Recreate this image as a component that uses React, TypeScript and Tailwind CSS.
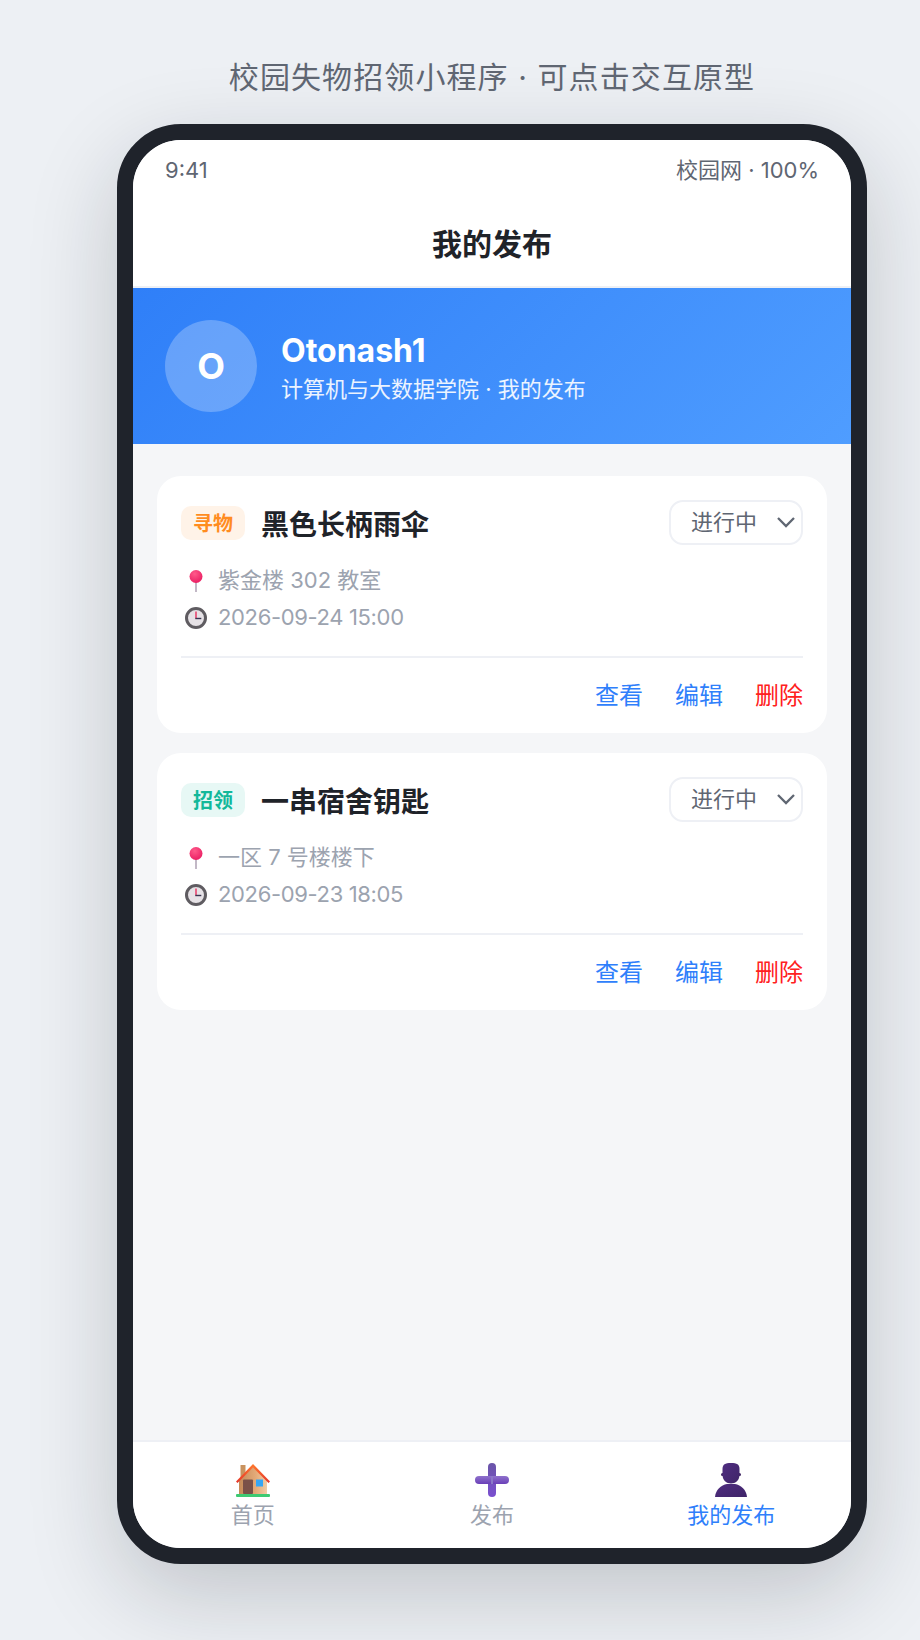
import React from 'react';

const PinIcon = ({ id }: { id: string }) => (
  <svg width="22" height="22" viewBox="0 0 22 22">
    <defs>
      <radialGradient id={id} cx="0.4" cy="0.3" r="0.8">
        <stop offset="0" stopColor="#ff5a8a" />
        <stop offset="1" stopColor="#e8185f" />
      </radialGradient>
    </defs>
    <rect x="10.200" y="10" width="1.600" height="12" fill="#b3a7b8" />
    <circle cx="11" cy="6.500" r="6.500" fill={`url(#${id})`} />
  </svg>
);

const ClockIcon = () => (
  <svg width="22" height="22" viewBox="0 0 22 22">
    <circle cx="11" cy="11" r="9.500" fill="#e6e2e6" stroke="#5f5c61" strokeWidth="3" />
    <rect x="10.300" y="4.500" width="1.400" height="7" fill="#e8315f" />
    <rect x="10.300" y="10.800" width="6" height="1.400" fill="#3a3550" />
  </svg>
);

const HomeIcon = () => (
  <svg width="34" height="34" viewBox="0 0 34 34">
    <defs>
      <linearGradient id="wall" x1="0" y1="0" x2="1" y2="0">
        <stop offset="0" stopColor="#c48a58" />
        <stop offset="0.6" stopColor="#e3aa78" />
        <stop offset="1" stopColor="#f2cda6" />
      </linearGradient>
      <linearGradient id="roof" x1="0" y1="1" x2="0" y2="0">
        <stop offset="0" stopColor="#e5352b" />
        <stop offset="1" stopColor="#ff7a2c" />
      </linearGradient>
    </defs>
    <rect x="4.500" y="2" width="5" height="14" fill="#c9935f" />
    <path d="M3 17.500 17 4l14 13.500V31H3z" fill="url(#wall)" />
    <path d="M0 18.500 17 1l17 17.500-1.500 1.500L17 4.500 1.500 20z" fill="url(#roof)" />
    <rect x="7" y="16.500" width="10" height="14.500" rx="1" fill="#7a5148" />
    <rect x="20" y="16.500" width="7" height="7" fill="#35a6f5" />
    <rect x="0" y="31" width="34" height="3" rx="1" fill="#3dca72" />
  </svg>
);

const PlusIcon = () => (
  <svg width="34" height="34" viewBox="0 0 34 34">
    <defs>
      <linearGradient id="plusV" x1="0" y1="0" x2="0" y2="1">
        <stop offset="0" stopColor="#6a55a8" />
        <stop offset="1" stopColor="#7a4fd0" />
      </linearGradient>
      <linearGradient id="plusH" x1="0" y1="0" x2="0" y2="1">
        <stop offset="0" stopColor="#8f72cc" />
        <stop offset="1" stopColor="#6a3fb8" />
      </linearGradient>
    </defs>
    <rect x="13" y="0" width="8" height="34" rx="4" fill="url(#plusV)" />
    <rect x="0" y="13" width="34" height="8" rx="4" fill="url(#plusH)" />
    <rect x="16" y="13" width="2" height="8" fill="#8a78c8" />
  </svg>
);

const PersonIcon = () => (
  <svg width="34" height="34" viewBox="0 0 34 34">
    <defs>
      <linearGradient id="person" x1="0" y1="0" x2="1" y2="1">
        <stop offset="0" stopColor="#4f2d80" />
        <stop offset="1" stopColor="#3f2468" />
      </linearGradient>
    </defs>
    <circle cx="8.500" cy="11.500" r="1.500" fill="#3b2160" />
    <circle cx="25.500" cy="11.500" r="1.500" fill="#3b2160" />
    <path d="M17 0c6 0 8.500 1.500 8.500 6v6c0 5-4 8.500-8.500 8.500S8.500 17 8.500 12V6C8.500 1.500 11 0 17 0z" fill="url(#person)" />
    <path d="M1 34c.5-7 6-12 12-13h8c6 1 11.500 6 12 13z" fill="url(#person)" />
  </svg>
);

const Chevron = () => (
  <svg width="18" height="11" viewBox="0 0 18 11" fill="none" stroke="#5f6672" strokeWidth="2.300">
    <path d="M1 1l8 8 8-8" />
  </svg>
);

type Post = {
  id: string;
  tag: string;
  tagClass: string;
  title: string;
  place: string;
  time: string;
};

const posts: Post[] = [
  { id: 'a', tag: '寻物', tagClass: 'bg-[#fff3e8] text-[#ff8c1f]', title: '黑色长柄雨伞', place: '紫金楼 302 教室', time: '2026-09-24 15:00' },
  { id: 'b', tag: '招领', tagClass: 'bg-[#e7f8f5] text-[#13b89a]', title: '一串宿舍钥匙', place: '一区 7 号楼楼下', time: '2026-09-23 18:05' },
];

const PostCard = ({ post }: { post: Post }) => (
  <div className="rounded-[24px] bg-white px-6 pt-6 pb-[19px]">
    <div className="flex items-center justify-between">
      <div className="flex items-center gap-4">
        <span className={`flex h-[34px] w-16 items-center justify-center rounded-[10px] pt-[2px] text-[20px] font-bold ${post.tagClass}`}>{post.tag}</span>
        <span className="pt-1 text-[28px] leading-[36px] font-bold text-[#1f2329]">{post.title}</span>
      </div>
      <div className="flex h-[45px] w-[134px] items-center justify-between rounded-[14px] border-2 border-[#eef0f5] pr-[6px] pl-[20px] text-[22px] text-[#5f6672]">
        进行中
        <Chevron />
      </div>
    </div>
    <div className="mt-[19px] flex flex-col gap-1 pl-1 text-[22px] leading-[33px] text-[#9ca3af]">
      <div className="flex items-center gap-[11px]">
        <PinIcon id={`pin-${post.id}`} />
        <span>{post.place}</span>
      </div>
      <div className="flex items-center gap-[11px]">
        <ClockIcon />
        <span className="tracking-[-0.35px]">{post.time}</span>
      </div>
    </div>
    <div className="mt-[22px] flex justify-end gap-8 border-t-2 border-[#eef0f5] pt-[20px] text-[24px] leading-[36px]">
      <span className="text-[#2f7ffb]">查看</span>
      <span className="text-[#2f7ffb]">编辑</span>
      <span className="text-[#ff2020]">删除</span>
    </div>
  </div>
);

const NavItem = ({ icon, label, active }: { icon: React.ReactNode; label: string; active?: boolean }) => (
  <div className="flex flex-1 flex-col items-center">
    {icon}
    <span className={`mt-[2px] text-[22px] leading-[33px] ${active ? 'text-[#2f7ffb]' : 'text-[#9ca3af]'}`}>{label}</span>
  </div>
);

export default function App() {
  return (
    <div className="min-h-[1640px] bg-[#edf0f4] pt-[57px] pl-[117px] font-['Inter','Noto_Sans_CJK_SC',sans-serif]">
      <div className="w-[750px]">
        <h1 className="text-center text-[30px] leading-[40px] tracking-[1.1px] text-[#5f6672]">校园失物招领小程序 · 可点击交互原型</h1>
        <div className="mt-[27px] h-[1440px] overflow-hidden rounded-[64px] border-[16px] border-[#1f232b] bg-[#f5f6f8] shadow-[0_30px_90px_rgba(20,25,35,0.2)]">
          <div className="flex h-full flex-col">
            <div className="flex h-[148px] shrink-0 flex-col border-b-2 border-[#eef0f5] bg-white">
              <div className="flex justify-between px-8 pt-[14px] text-[22px] leading-[33px] text-[#5f6672]">
                <span>9:41</span>
                <span>校园网 · 100%</span>
              </div>
              <div className="mt-[35px] text-center text-[30px] leading-[44px] font-bold text-[#1f2329]">我的发布</div>
            </div>
            <div className="flex h-[156px] shrink-0 items-center gap-6 bg-[linear-gradient(135deg,#2f7ff8,#4f9dff)] px-8">
              <div className="flex h-[92px] w-[92px] items-center justify-center rounded-full bg-white/25 text-[36px] font-bold text-white">O</div>
              <div className="pt-[3px] text-white">
                <div className="text-[32px] leading-[44px] font-bold">Otonash1</div>
                <div className="text-[22px] leading-[33px] text-white/90">计算机与大数据学院 · 我的发布</div>
              </div>
            </div>
            <div className="flex flex-1 flex-col gap-5 px-6 pt-8">
              {posts.map((post) => (
                <PostCard key={post.id} post={post} />
              ))}
            </div>
            <div className="flex h-[108px] shrink-0 items-start border-t-2 border-[#eef0f5] bg-white pt-[21px]">
              <NavItem icon={<HomeIcon />} label="首页" />
              <NavItem icon={<PlusIcon />} label="发布" />
              <NavItem icon={<PersonIcon />} label="我的发布" active />
            </div>
          </div>
        </div>
      </div>
    </div>
  );
}
